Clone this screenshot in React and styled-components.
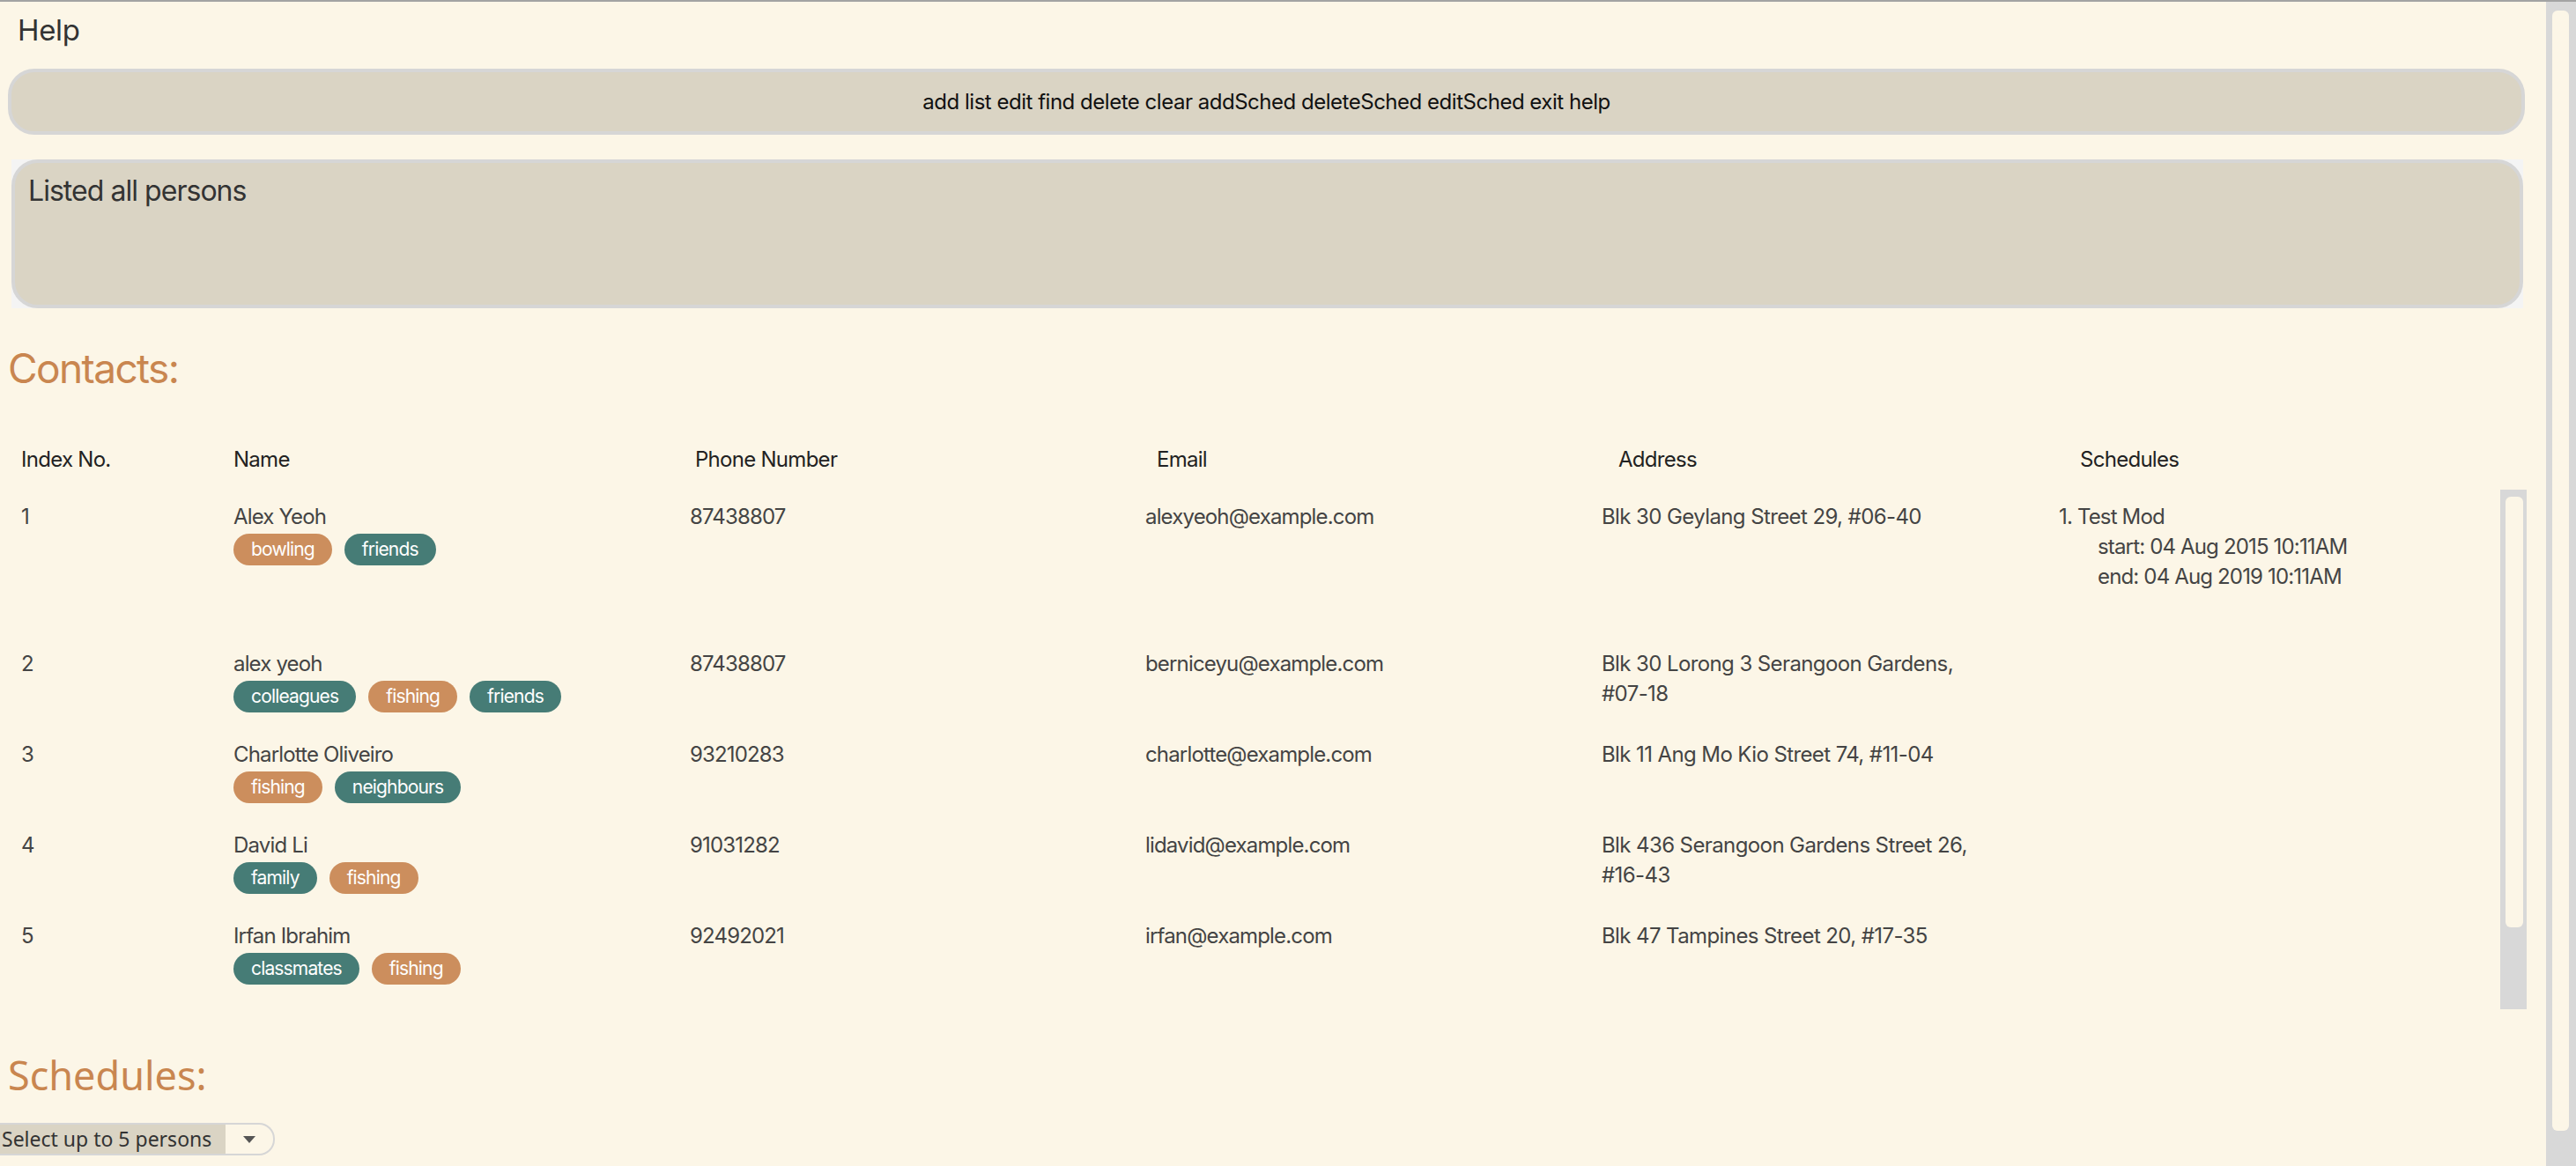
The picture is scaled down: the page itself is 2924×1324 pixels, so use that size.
import React from "react";
import styled, { createGlobalStyle } from "styled-components";

const GlobalStyle = createGlobalStyle`
  html, body {
    margin: 0;
    padding: 0;
    background: #fcf6e7;
    overflow: hidden;
  }
  body {
    font-family: Inter, "Noto Sans", sans-serif;
    color: #444;
  }
`;

const contacts = [
  {
    name: "Alex Yeoh",
    tags: [["bowling", "orange"], ["friends", "teal"]],
    phone: "87438807",
    email: "alexyeoh@example.com",
    address: "Blk 30 Geylang Street 29, #06-40",
    schedules: [{ title: "Test Mod", start: "04 Aug 2015 10:11AM", end: "04 Aug 2019 10:11AM" }],
  },
  {
    name: "alex yeoh",
    tags: [["colleagues", "teal"], ["fishing", "orange"], ["friends", "teal"]],
    phone: "87438807",
    email: "berniceyu@example.com",
    address: "Blk 30 Lorong 3 Serangoon Gardens, #07-18",
    schedules: [],
  },
  {
    name: "Charlotte Oliveiro",
    tags: [["fishing", "orange"], ["neighbours", "teal"]],
    phone: "93210283",
    email: "charlotte@example.com",
    address: "Blk 11 Ang Mo Kio Street 74, #11-04",
    schedules: [],
  },
  {
    name: "David Li",
    tags: [["family", "teal"], ["fishing", "orange"]],
    phone: "91031282",
    email: "lidavid@example.com",
    address: "Blk 436 Serangoon Gardens Street 26, #16-43",
    schedules: [],
  },
  {
    name: "Irfan Ibrahim",
    tags: [["classmates", "teal"], ["fishing", "orange"]],
    phone: "92492021",
    email: "irfan@example.com",
    address: "Blk 47 Tampines Street 20, #17-35",
    schedules: [],
  },
];

const Window = styled.div`
  display: flex;
  height: 1324px;
  border-top: 2px solid #a3a3a3;
  box-sizing: border-box;
`;

const Main = styled.div`
  flex: 1;
  display: flex;
  flex-direction: column;
  min-width: 0;
`;

const PageScroll = styled.div`
  width: 34px;
  background: #d8d8d8;
  padding: 10px 8px 40px 7px;
  box-sizing: border-box;
  display: flex;
`;

const PageThumb = styled.div`
  flex: 1;
  background: #fcf6e7;
  border-radius: 6px;
`;

const MenuBar = styled.div`
  padding: 14px 20px 0;
  font-size: 33px;
  line-height: 36px;
  color: #333;
  letter-spacing: -0.01em;
`;

const CommandBar = styled.div`
  margin: 26px 24px 0 9px;
  height: 75px;
  box-sizing: border-box;
  border: 4px solid #d6d6d6;
  border-radius: 30px;
  background: #dad4c4;
  display: flex;
  align-items: center;
  justify-content: center;
  font-size: 24px;
  color: #111;
  letter-spacing: -0.02em;
`;

const ResultWrap = styled.div`
  margin: 28px 26px 0 13px;
  background: #f4f4f4;
`;

const ResultBox = styled.div`
  height: 169px;
  box-sizing: border-box;
  border: 4px solid #d6d6d6;
  border-radius: 30px;
  background: #dad4c4;
  padding: 14px 15px;
  font-size: 32px;
  line-height: 36px;
  color: #333;
  letter-spacing: -0.03em;
`;

const SectionTitle = styled.h2`
  margin: ${(p) => p.$top}px 0 0 9px;
  font-weight: 400;
  font-size: ${(p) => p.$size}px;
  line-height: 56px;
  color: #c98650;
  font-family: ${(p) => (p.$alt ? '"Noto Sans", sans-serif' : 'Inter, sans-serif')};
  letter-spacing: ${(p) => (p.$alt ? "0" : "-0.035em")};
`;

const Table = styled.div`
  margin: 61px 20px 0 9px;
  display: flex;
  flex-direction: column;
`;

const HeaderRow = styled.div`
  display: grid;
  grid-template-columns: 241px repeat(5, 524px);
  font-size: 24px;
  line-height: 30px;
  color: #222;
  letter-spacing: -0.03em;
`;

const HeadCell = styled.div`
  padding-left: 15px;
`;

const ListArea = styled.div`
  margin-top: 19px;
  height: 590px;
  display: flex;
  overflow: hidden;
`;

const Rows = styled.div`
  width: 2829px;
`;

const Row = styled.div`
  display: grid;
  grid-template-columns: 241px 518px 517px 518px 519px 1fr;
  padding: 14px 0 17px;
  font-size: 24px;
  line-height: 34px;
  color: #444;
  letter-spacing: -0.035em;
`;

const Cell = styled.div`
  padding-left: 15px;
`;

const Address = styled.div`
  max-width: 450px;
  letter-spacing: -0.025em;
`;

const Tags = styled.div`
  display: flex;
  gap: 14px;
  margin-top: 2px;
`;

const Tag = styled.span`
  height: 36px;
  line-height: 36px;
  padding: 0 20px;
  border-radius: 18px;
  font-size: 21px;
  color: #fff;
  background: ${(p) => (p.$tone === "orange" ? "#cc8e5d" : "#467c76")};
`;

const SchedList = styled.div`
  padding-bottom: 34px;
`;

const SchedTitle = styled.div``;

const SchedDetail = styled.div`
  padding-left: 44px;
`;

const ListScroll = styled.div`
  width: 30px;
  height: 590px;
  background: #d8d8d8;
  padding: 8px 4px 93px 6px;
  box-sizing: border-box;
  display: flex;
`;

const ListThumb = styled.div`
  flex: 1;
  background: #fcf6e7;
  border-radius: 6px;
`;

const PersonSelect = styled.div`
  margin-top: 26px;
  display: flex;
  width: 312px;
  height: 37px;
  box-sizing: border-box;
  border: 2px solid #d6d6d6;
  border-left: none;
  border-radius: 0 18px 18px 0;
  overflow: hidden;
  font-family: "Noto Sans", sans-serif;
`;

const SelectLabel = styled.div`
  width: 254px;
  background: #dad4c4;
  font-size: 23px;
  line-height: 33px;
  color: #333;
  padding-left: 2px;
  white-space: nowrap;
`;

const SelectArrow = styled.div`
  flex: 1;
  display: flex;
  align-items: center;
  justify-content: center;
`;

const Caret = styled.div`
  width: 0;
  height: 0;
  border-left: 7px solid transparent;
  border-right: 7px solid transparent;
  border-top: 8px solid #555;
`;

const headers = ["Index No.", "Name", "Phone Number", "Email", "Address", "Schedules"];

export default function App() {
  return (
    <>
      <GlobalStyle />
      <Window>
        <Main>
          <MenuBar>Help</MenuBar>
          <CommandBar>
            add list edit find delete clear addSched deleteSched editSched exit help
          </CommandBar>
          <ResultWrap>
            <ResultBox>Listed all persons</ResultBox>
          </ResultWrap>
          <SectionTitle $top={40} $size={46}>Contacts:</SectionTitle>
          <Table>
            <HeaderRow>
              {headers.map((h) => (
                <HeadCell key={h}>{h}</HeadCell>
              ))}
            </HeaderRow>
            <ListArea>
              <Rows>
                {contacts.map((c, i) => (
                  <Row key={i}>
                    <Cell>{i + 1}</Cell>
                    <Cell>
                      <div>{c.name}</div>
                      <Tags>
                        {c.tags.map(([t, tone]) => (
                          <Tag key={t} $tone={tone}>{t}</Tag>
                        ))}
                      </Tags>
                    </Cell>
                    <Cell>{c.phone}</Cell>
                    <Cell>{c.email}</Cell>
                    <Cell>
                      <Address>{c.address}</Address>
                    </Cell>
                    <Cell>
                      {c.schedules.length > 0 && (
                        <SchedList>
                          {c.schedules.map((s, k) => (
                            <div key={k}>
                              <SchedTitle>{k + 1}. {s.title}</SchedTitle>
                              <SchedDetail>start: {s.start}</SchedDetail>
                              <SchedDetail>end: {s.end}</SchedDetail>
                            </div>
                          ))}
                        </SchedList>
                      )}
                    </Cell>
                  </Row>
                ))}
              </Rows>
              <ListScroll>
                <ListThumb />
              </ListScroll>
            </ListArea>
          </Table>
          <SectionTitle $top={47} $size={45} $alt>Schedules:</SectionTitle>
          <PersonSelect>
            <SelectLabel>Select up to 5 persons</SelectLabel>
            <SelectArrow>
              <Caret />
            </SelectArrow>
          </PersonSelect>
        </Main>
        <PageScroll>
          <PageThumb />
        </PageScroll>
      </Window>
    </>
  );
}
